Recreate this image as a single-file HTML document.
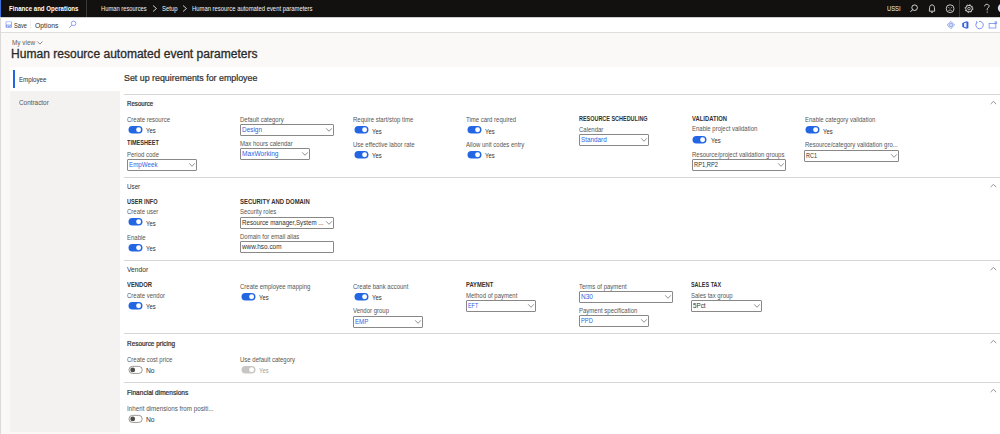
<!DOCTYPE html>
<html><head><meta charset="utf-8"><style>
html,body{margin:0;padding:0;width:1000px;height:434px;overflow:hidden;background:#faf9f8;}
body{position:relative;font-family:"Liberation Sans",sans-serif;}
.t{position:absolute;white-space:nowrap;line-height:1;}
.r{position:absolute;display:block;}
</style></head><body>
<div class="r" style="left:0px;top:0px;width:1000px;height:17px;background:#121110;"></div>
<div class="r" style="left:0px;top:0px;width:1px;height:17px;background:#3f6fd8;"></div>
<div class="t" style="left:9.00px;top:6px;font-size:6.8px;color:#ffffff;font-weight:700;transform:scaleX(0.8975);transform-origin:0 0;">Finance and Operations</div>
<div class="r" style="left:86px;top:0px;width:1px;height:17px;background:#3b3a39;"></div>
<div class="t" style="left:101.40px;top:6px;font-size:6.6px;color:#f3f2f1;font-weight:400;transform:scaleX(0.8781);transform-origin:0 0;">Human resources</div>
<svg class="r" style="left:151px;top:4px;" width="8" height="9" viewBox="0 0 8 9"><polyline points="2,1.5 5.5,4.5 2,7.5" fill="none" stroke="#f3f2f1" stroke-width="0.8"/></svg>
<div class="t" style="left:161.60px;top:6px;font-size:6.6px;color:#f3f2f1;font-weight:400;transform:scaleX(0.8994);transform-origin:0 0;">Setup</div>
<svg class="r" style="left:181px;top:4px;" width="8" height="9" viewBox="0 0 8 9"><polyline points="2,1.5 5.5,4.5 2,7.5" fill="none" stroke="#f3f2f1" stroke-width="0.8"/></svg>
<div class="t" style="left:192.00px;top:6px;font-size:6.6px;color:#f3f2f1;font-weight:400;transform:scaleX(0.8933);transform-origin:0 0;">Human resource automated event parameters</div>
<div class="t" style="left:887.00px;top:6px;font-size:6.6px;color:#f3f2f1;font-weight:400;transform:scaleX(0.8772);transform-origin:0 0;">USSI</div>
<svg class="r" style="left:908px;top:2px;" width="12" height="12" viewBox="0 0 12 12"><circle cx="6.6" cy="5.7" r="2.8" fill="none" stroke="#f3f2f1" stroke-width="0.85"/><line x1="4.6" y1="7.7" x2="2.4" y2="9.9" stroke="#f3f2f1" stroke-width="0.95"/></svg>
<svg class="r" style="left:927px;top:2px;" width="10" height="12" viewBox="0 0 10 12"><path d="M2.3,9.2 L2.6,5.6 C2.7,3.8 3.6,2.9 5,2.9 C6.4,2.9 7.3,3.8 7.4,5.6 L7.7,9.2 Z" fill="none" stroke="#f3f2f1" stroke-width="0.8" stroke-linejoin="round"/><line x1="4" y1="10.4" x2="6" y2="10.4" stroke="#f3f2f1" stroke-width="0.7"/></svg>
<svg class="r" style="left:945px;top:3px;" width="11" height="11" viewBox="0 0 11 11"><circle cx="5.1" cy="5.7" r="3.9" fill="none" stroke="#f3f2f1" stroke-width="0.8"/><path d="M3.4,7.6 Q5.1,6.3 6.8,7.6" fill="none" stroke="#f3f2f1" stroke-width="0.6"/><line x1="3.3" y1="4.4" x2="4.5" y2="5.1" stroke="#f3f2f1" stroke-width="0.6"/><line x1="6.9" y1="4.4" x2="5.7" y2="5.1" stroke="#f3f2f1" stroke-width="0.6"/></svg>
<div class="r" style="left:959px;top:0px;width:1px;height:17px;background:#3b3a39;"></div>
<svg class="r" style="left:963px;top:2px;" width="12" height="13" viewBox="0 0 12 13"><circle cx="6" cy="6.6" r="3.3" fill="none" stroke="#f3f2f1" stroke-width="0.8"/><circle cx="6" cy="6.6" r="3.9" fill="none" stroke="#f3f2f1" stroke-width="0.9" stroke-dasharray="1.2 1.86"/><circle cx="6" cy="6.6" r="1.3" fill="none" stroke="#f3f2f1" stroke-width="0.65"/></svg>
<svg class="r" style="left:983px;top:3px;" width="8" height="11" viewBox="0 0 8 11"><path d="M1.7,3.3 C1.7,1.9 2.8,1.3 3.9,1.3 C5.1,1.3 6.1,2.0 6.1,3.2 C6.1,4.6 4.2,4.9 4.2,6.4 L4.2,7.4" fill="none" stroke="#f3f2f1" stroke-width="0.85"/><circle cx="4.2" cy="9.1" r="0.55" fill="#f3f2f1"/></svg>
<svg class="r" style="left:997px;top:3px;" width="3" height="11" viewBox="0 0 3 11"><circle cx="5.2" cy="5.1" r="4.4" fill="#d3def3"/></svg>
<div class="r" style="left:0px;top:17px;width:1000px;height:15px;background:#ffffff;"></div>
<div class="r" style="left:0px;top:32px;width:1000px;height:1px;background:#e1dfdd;"></div>
<div class="r" style="left:0px;top:17px;width:1000px;height:1px;background:#cfcfcf;"></div>
<svg class="r" style="left:4px;top:20px;" width="10" height="10" viewBox="0 0 10 10"><rect x="1.6" y="1.4" width="6.3" height="6.4" rx="0.7" fill="#8c9ff0" /><rect x="2.4" y="2.1" width="4.7" height="2.5" fill="#fff"/><rect x="3.1" y="5.6" width="3.3" height="1.5" fill="#fff"/><rect x="3.6" y="6.3" width="2.3" height="0.8" fill="#5a78e6"/></svg>
<div class="t" style="left:13.50px;top:23px;font-size:6.8px;color:#323130;font-weight:400;transform:scaleX(0.8323);transform-origin:0 0;">Save</div>
<div class="r" style="left:30px;top:20px;width:1px;height:9px;background:#f1f0ef;"></div>
<div class="t" style="left:35.00px;top:23px;font-size:6.8px;color:#323130;font-weight:400;transform:scaleX(1.0027);transform-origin:0 0;">Options</div>
<svg class="r" style="left:68px;top:20px;" width="10" height="9" viewBox="0 0 10 9"><circle cx="5.6" cy="3.4" r="2.3" fill="none" stroke="#6d84ec" stroke-width="0.75"/><line x1="3.9" y1="5.1" x2="1.3" y2="7.7" stroke="#6d84ec" stroke-width="0.8"/></svg>
<svg class="r" style="left:946px;top:20px;" width="10" height="10" viewBox="0 0 10 10"><path d="M4.9,1.4 L8.5,5 L4.9,8.6 L1.3,5 Z" fill="none" stroke="#5a7de6" stroke-width="0.7"/><circle cx="4.9" cy="5" r="1.7" fill="none" stroke="#5a7de6" stroke-width="0.6"/><path d="M3.7,3.8 L6.1,6.2 M6.1,3.8 L3.7,6.2" stroke="#8aa2ee" stroke-width="0.4"/></svg>
<svg class="r" style="left:961px;top:20px;" width="9" height="10" viewBox="0 0 9 10"><path d="M1.3,2.9 L5.6,1.2 L7.4,1.9 L7.4,8.1 L5.6,8.8 L1.3,7.1 Z" fill="#2b5ee0"/><path d="M3,3.3 L5.5,2.5 L5.5,7.5 L3,6.7 Z" fill="#e8eefc"/></svg>
<svg class="r" style="left:974px;top:20px;" width="10" height="10" viewBox="0 0 10 10"><path d="M3.0,2.4 A3.7,3.7 0 1 0 5.0,1.4" fill="none" stroke="#4d72e4" stroke-width="0.75"/><path d="M2.0,1.0 L3.3,2.5 L1.8,3.6" fill="none" stroke="#4d72e4" stroke-width="0.65"/></svg>
<svg class="r" style="left:988px;top:20px;" width="10" height="10" viewBox="0 0 10 10"><rect x="1.1" y="3.4" width="6.8" height="4.6" fill="none" stroke="#5a7de6" stroke-width="0.7"/><path d="M6.4,1.8 L8.6,1.8 L8.6,4.0 M8.6,1.8 L6.2,4.2" fill="none" stroke="#5a7de6" stroke-width="0.65"/></svg>
<div class="r" style="left:0px;top:33px;width:1000px;height:401px;background:#faf9f8;"></div>
<div class="r" style="left:0px;top:17px;width:1px;height:417px;background:#dcdad8;"></div>
<div class="t" style="left:11.90px;top:40px;font-size:6.5px;color:#605e5c;font-weight:400;transform:scaleX(0.9879);transform-origin:0 0;">My view</div>
<svg class="r" style="left:36px;top:40px;" width="8" height="6" viewBox="0 0 8 6"><polyline points="1.3,1.5 3.9,4.1 6.5,1.5" fill="none" stroke="#605e5c" stroke-width="0.7"/></svg>
<div class="t" style="left:11.00px;top:48px;font-size:12px;color:#2b2a29;font-weight:400;transform:scaleX(1.0042);transform-origin:0 0;-webkit-text-stroke:0.3px #2b2a29;">Human resource automated event parameters</div>
<div class="r" style="left:10px;top:67px;width:110px;height:365px;background:#f3f2f1;"></div>
<div class="r" style="left:10px;top:67px;width:110px;height:24px;background:#ffffff;"></div>
<div class="r" style="left:13px;top:70px;width:2px;height:18px;background:#2266e3;"></div>
<div class="t" style="left:18.60px;top:77px;font-size:6.6px;color:#323130;font-weight:400;transform:scaleX(0.9377);transform-origin:0 0;">Employee</div>
<div class="t" style="left:18.60px;top:100px;font-size:6.6px;color:#57554f;font-weight:400;transform:scaleX(0.9676);transform-origin:0 0;">Contractor</div>
<div class="r" style="left:120px;top:67px;width:880px;height:367px;background:#ffffff;"></div>
<div class="t" style="left:123.80px;top:74px;font-size:8.5px;color:#323130;font-weight:400;transform:scaleX(1.0418);transform-origin:0 0;-webkit-text-stroke:0.22px #323130;">Set up requirements for employee</div>
<div class="r" style="left:124px;top:94px;width:876px;height:1px;background:#d8d6d4;"></div>
<div class="t" style="left:127.40px;top:101px;font-size:6.6px;color:#323130;font-weight:400;transform:scaleX(0.9279);transform-origin:0 0;-webkit-text-stroke:0.22px #323130;">Resource</div>
<svg class="r" style="left:988px;top:100px;" width="10" height="6" viewBox="0 0 10 6"><polyline points="2.6,4.1 5.4,1.4 8.2,4.1" fill="none" stroke="#6f6d6b" stroke-width="0.75"/></svg>
<div class="t" style="left:127.00px;top:117px;font-size:6.5px;color:#57554f;font-weight:400;transform:scaleX(0.9231);transform-origin:0 0;">Create resource</div>
<svg class="r" style="left:127.5px;top:125px;" width="16" height="10" viewBox="0 0 16 10"><rect x="0.5" y="0.9" width="14" height="7.6" rx="3.8" fill="#2266e3"/><circle cx="10.6" cy="4.7" r="2.45" fill="#fff"/></svg>
<div class="t" style="left:146.00px;top:127px;font-size:7.0px;color:#323130;font-weight:400;transform:scaleX(0.8405);transform-origin:0 0;">Yes</div>
<div class="t" style="left:127.40px;top:140px;font-size:6.5px;color:#323130;font-weight:700;transform:scaleX(0.8548);transform-origin:0 0;">TIMESHEET</div>
<div class="t" style="left:127.00px;top:152px;font-size:6.5px;color:#57554f;font-weight:400;transform:scaleX(0.9231);transform-origin:0 0;">Period code</div>
<div class="r" style="left:127px;top:159px;width:68px;height:10px;border:1px solid #8a8886;border-radius:1px;background:#fff"></div>
<div class="t" style="left:129.40px;top:162px;font-size:6.6px;color:#2f5fdf;font-weight:400;transform:scaleX(0.9407);transform-origin:0 0;">EmpWeek</div>
<svg class="r" style="left:188px;top:161px;" width="8" height="8" viewBox="0 0 8 8"><polyline points="1.2,2.30 4,5.30 6.8,2.30" fill="none" stroke="#6b6967" stroke-width="0.72"/></svg>
<div class="t" style="left:240.00px;top:117px;font-size:6.5px;color:#57554f;font-weight:400;transform:scaleX(0.9231);transform-origin:0 0;">Default category</div>
<div class="r" style="left:240px;top:124px;width:92px;height:10px;border:1px solid #8a8886;border-radius:1px;background:#fff"></div>
<div class="t" style="left:242.40px;top:127px;font-size:6.6px;color:#2f5fdf;font-weight:400;transform:scaleX(0.9741);transform-origin:0 0;">Design</div>
<svg class="r" style="left:325px;top:126px;" width="8" height="8" viewBox="0 0 8 8"><polyline points="1.2,2.30 4,5.30 6.8,2.30" fill="none" stroke="#6b6967" stroke-width="0.72"/></svg>
<div class="t" style="left:240.00px;top:141px;font-size:6.5px;color:#57554f;font-weight:400;transform:scaleX(0.9231);transform-origin:0 0;">Max hours calendar</div>
<div class="r" style="left:240px;top:148px;width:68px;height:10px;border:1px solid #8a8886;border-radius:1px;background:#fff"></div>
<div class="t" style="left:242.40px;top:151px;font-size:6.6px;color:#2f5fdf;font-weight:400;transform:scaleX(0.9991);transform-origin:0 0;">MaxWorking</div>
<svg class="r" style="left:301px;top:150px;" width="8" height="8" viewBox="0 0 8 8"><polyline points="1.2,2.30 4,5.30 6.8,2.30" fill="none" stroke="#6b6967" stroke-width="0.72"/></svg>
<div class="t" style="left:353.00px;top:117px;font-size:6.5px;color:#57554f;font-weight:400;transform:scaleX(0.9231);transform-origin:0 0;">Require start/stop time</div>
<svg class="r" style="left:353.5px;top:125.3px;" width="16" height="10" viewBox="0 0 16 10"><rect x="0.5" y="0.9" width="14" height="7.6" rx="3.8" fill="#2266e3"/><circle cx="10.6" cy="4.7" r="2.45" fill="#fff"/></svg>
<div class="t" style="left:372.00px;top:128px;font-size:7.0px;color:#323130;font-weight:400;transform:scaleX(0.8405);transform-origin:0 0;">Yes</div>
<div class="t" style="left:353.00px;top:142px;font-size:6.5px;color:#57554f;font-weight:400;transform:scaleX(0.9231);transform-origin:0 0;">Use effective labor rate</div>
<svg class="r" style="left:353.5px;top:150.15px;" width="16" height="10" viewBox="0 0 16 10"><rect x="0.5" y="0.9" width="14" height="7.6" rx="3.8" fill="#2266e3"/><circle cx="10.6" cy="4.7" r="2.45" fill="#fff"/></svg>
<div class="t" style="left:372.00px;top:152px;font-size:7.0px;color:#323130;font-weight:400;transform:scaleX(0.8405);transform-origin:0 0;">Yes</div>
<div class="t" style="left:466.00px;top:117px;font-size:6.5px;color:#57554f;font-weight:400;transform:scaleX(0.9231);transform-origin:0 0;">Time card required</div>
<svg class="r" style="left:466.5px;top:125.3px;" width="16" height="10" viewBox="0 0 16 10"><rect x="0.5" y="0.9" width="14" height="7.6" rx="3.8" fill="#2266e3"/><circle cx="10.6" cy="4.7" r="2.45" fill="#fff"/></svg>
<div class="t" style="left:485.00px;top:128px;font-size:7.0px;color:#323130;font-weight:400;transform:scaleX(0.8405);transform-origin:0 0;">Yes</div>
<div class="t" style="left:466.00px;top:142px;font-size:6.5px;color:#57554f;font-weight:400;transform:scaleX(0.9231);transform-origin:0 0;">Allow unit codes entry</div>
<svg class="r" style="left:466.5px;top:150.15px;" width="16" height="10" viewBox="0 0 16 10"><rect x="0.5" y="0.9" width="14" height="7.6" rx="3.8" fill="#2266e3"/><circle cx="10.6" cy="4.7" r="2.45" fill="#fff"/></svg>
<div class="t" style="left:485.00px;top:152px;font-size:7.0px;color:#323130;font-weight:400;transform:scaleX(0.8405);transform-origin:0 0;">Yes</div>
<div class="t" style="left:578.70px;top:116px;font-size:6.5px;color:#323130;font-weight:700;transform:scaleX(0.8404);transform-origin:0 0;">RESOURCE SCHEDULING</div>
<div class="t" style="left:578.70px;top:127px;font-size:6.5px;color:#57554f;font-weight:400;transform:scaleX(0.9231);transform-origin:0 0;">Calendar</div>
<div class="r" style="left:579px;top:134px;width:68px;height:10px;border:1px solid #8a8886;border-radius:1px;background:#fff"></div>
<div class="t" style="left:581.40px;top:137px;font-size:6.6px;color:#2f5fdf;font-weight:400;transform:scaleX(0.9602);transform-origin:0 0;">Standard</div>
<svg class="r" style="left:640px;top:136px;" width="8" height="8" viewBox="0 0 8 8"><polyline points="1.2,2.30 4,5.30 6.8,2.30" fill="none" stroke="#6b6967" stroke-width="0.72"/></svg>
<div class="t" style="left:691.50px;top:116px;font-size:6.5px;color:#323130;font-weight:700;transform:scaleX(0.9054);transform-origin:0 0;">VALIDATION</div>
<div class="t" style="left:691.50px;top:126px;font-size:6.5px;color:#57554f;font-weight:400;transform:scaleX(0.9231);transform-origin:0 0;">Enable project validation</div>
<svg class="r" style="left:692px;top:134.5px;" width="16" height="10" viewBox="0 0 16 10"><rect x="0.5" y="0.9" width="14" height="7.6" rx="3.8" fill="#2266e3"/><circle cx="10.6" cy="4.7" r="2.45" fill="#fff"/></svg>
<div class="t" style="left:710.50px;top:137px;font-size:7.0px;color:#323130;font-weight:400;transform:scaleX(0.8405);transform-origin:0 0;">Yes</div>
<div class="t" style="left:691.50px;top:152px;font-size:6.5px;color:#57554f;font-weight:400;transform:scaleX(0.9231);transform-origin:0 0;">Resource/project validation groups</div>
<div class="r" style="left:692px;top:159px;width:92px;height:10px;border:1px solid #8a8886;border-radius:1px;background:#fff"></div>
<div class="t" style="left:694.40px;top:162px;font-size:6.6px;color:#323130;font-weight:400;transform:scaleX(0.8727);transform-origin:0 0;">RP1,RP2</div>
<svg class="r" style="left:777px;top:161px;" width="8" height="8" viewBox="0 0 8 8"><polyline points="1.2,2.30 4,5.30 6.8,2.30" fill="none" stroke="#6b6967" stroke-width="0.72"/></svg>
<div class="t" style="left:804.50px;top:117px;font-size:6.5px;color:#57554f;font-weight:400;transform:scaleX(0.9231);transform-origin:0 0;">Enable category validation</div>
<svg class="r" style="left:804.5px;top:125.45px;" width="16" height="10" viewBox="0 0 16 10"><rect x="0.5" y="0.9" width="14" height="7.6" rx="3.8" fill="#2266e3"/><circle cx="10.6" cy="4.7" r="2.45" fill="#fff"/></svg>
<div class="t" style="left:823.00px;top:128px;font-size:7.0px;color:#323130;font-weight:400;transform:scaleX(0.8405);transform-origin:0 0;">Yes</div>
<div class="t" style="left:804.50px;top:142px;font-size:6.5px;color:#57554f;font-weight:400;transform:scaleX(0.9231);transform-origin:0 0;">Resource/category validation gro...</div>
<div class="r" style="left:804px;top:150px;width:93px;height:10px;border:1px solid #8a8886;border-radius:1px;background:#fff"></div>
<div class="t" style="left:806.40px;top:153px;font-size:6.6px;color:#323130;font-weight:400;transform:scaleX(0.8331);transform-origin:0 0;">RC1</div>
<svg class="r" style="left:890px;top:152px;" width="8" height="8" viewBox="0 0 8 8"><polyline points="1.2,2.30 4,5.30 6.8,2.30" fill="none" stroke="#6b6967" stroke-width="0.72"/></svg>
<div class="r" style="left:124px;top:177px;width:876px;height:1px;background:#d8d6d4;"></div>
<div class="t" style="left:127.40px;top:184px;font-size:6.6px;color:#323130;font-weight:400;transform:scaleX(0.9481);transform-origin:0 0;">User</div>
<svg class="r" style="left:988px;top:183px;" width="10" height="6" viewBox="0 0 10 6"><polyline points="2.6,4.1 5.4,1.4 8.2,4.1" fill="none" stroke="#6f6d6b" stroke-width="0.75"/></svg>
<div class="t" style="left:127.40px;top:199px;font-size:6.5px;color:#323130;font-weight:700;transform:scaleX(0.8614);transform-origin:0 0;">USER INFO</div>
<div class="t" style="left:127.00px;top:209px;font-size:6.5px;color:#57554f;font-weight:400;transform:scaleX(0.9231);transform-origin:0 0;">Create user</div>
<svg class="r" style="left:127.5px;top:217.4px;" width="16" height="10" viewBox="0 0 16 10"><rect x="0.5" y="0.9" width="14" height="7.6" rx="3.8" fill="#2266e3"/><circle cx="10.6" cy="4.7" r="2.45" fill="#fff"/></svg>
<div class="t" style="left:146.00px;top:220px;font-size:7.0px;color:#323130;font-weight:400;transform:scaleX(0.8405);transform-origin:0 0;">Yes</div>
<div class="t" style="left:127.00px;top:235px;font-size:6.5px;color:#57554f;font-weight:400;transform:scaleX(0.9231);transform-origin:0 0;">Enable</div>
<svg class="r" style="left:127.5px;top:242.9px;" width="16" height="10" viewBox="0 0 16 10"><rect x="0.5" y="0.9" width="14" height="7.6" rx="3.8" fill="#2266e3"/><circle cx="10.6" cy="4.7" r="2.45" fill="#fff"/></svg>
<div class="t" style="left:146.00px;top:245px;font-size:7.0px;color:#323130;font-weight:400;transform:scaleX(0.8405);transform-origin:0 0;">Yes</div>
<div class="t" style="left:239.80px;top:199px;font-size:6.5px;color:#323130;font-weight:700;transform:scaleX(0.9117);transform-origin:0 0;">SECURITY AND DOMAIN</div>
<div class="t" style="left:240.00px;top:209px;font-size:6.5px;color:#57554f;font-weight:400;transform:scaleX(0.9231);transform-origin:0 0;">Security roles</div>
<div class="r" style="left:240px;top:217px;width:92px;height:10px;border:1px solid #8a8886;border-radius:1px;background:#fff"></div>
<div class="t" style="left:242.40px;top:220px;font-size:6.6px;color:#323130;font-weight:400;transform:scaleX(0.9383);transform-origin:0 0;">Resource manager,System ...</div>
<svg class="r" style="left:325px;top:219px;" width="8" height="8" viewBox="0 0 8 8"><polyline points="1.2,2.30 4,5.30 6.8,2.30" fill="none" stroke="#6b6967" stroke-width="0.72"/></svg>
<div class="t" style="left:240.00px;top:234px;font-size:6.5px;color:#57554f;font-weight:400;transform:scaleX(0.9231);transform-origin:0 0;">Domain for email alias</div>
<div class="r" style="left:240px;top:241px;width:92px;height:10px;border:1px solid #8a8886;border-radius:1px;background:#fff"></div>
<div class="t" style="left:242.40px;top:244px;font-size:6.6px;color:#323130;font-weight:400;transform:scaleX(0.9708);transform-origin:0 0;">www.hso.com</div>
<div class="r" style="left:124px;top:260px;width:876px;height:1px;background:#d8d6d4;"></div>
<div class="t" style="left:127.40px;top:267px;font-size:6.6px;color:#323130;font-weight:400;transform:scaleX(1.0093);transform-origin:0 0;">Vendor</div>
<svg class="r" style="left:988px;top:266px;" width="10" height="6" viewBox="0 0 10 6"><polyline points="2.6,4.1 5.4,1.4 8.2,4.1" fill="none" stroke="#6f6d6b" stroke-width="0.75"/></svg>
<div class="t" style="left:127.40px;top:282px;font-size:6.5px;color:#323130;font-weight:700;transform:scaleX(0.9025);transform-origin:0 0;">VENDOR</div>
<div class="t" style="left:127.00px;top:293px;font-size:6.5px;color:#57554f;font-weight:400;transform:scaleX(0.9231);transform-origin:0 0;">Create vendor</div>
<svg class="r" style="left:127.5px;top:300.5px;" width="16" height="10" viewBox="0 0 16 10"><rect x="0.5" y="0.9" width="14" height="7.6" rx="3.8" fill="#2266e3"/><circle cx="10.6" cy="4.7" r="2.45" fill="#fff"/></svg>
<div class="t" style="left:146.00px;top:303px;font-size:7.0px;color:#323130;font-weight:400;transform:scaleX(0.8405);transform-origin:0 0;">Yes</div>
<div class="t" style="left:240.00px;top:284px;font-size:6.5px;color:#57554f;font-weight:400;transform:scaleX(0.9231);transform-origin:0 0;">Create employee mapping</div>
<svg class="r" style="left:240.5px;top:291.5px;" width="16" height="10" viewBox="0 0 16 10"><rect x="0.5" y="0.9" width="14" height="7.6" rx="3.8" fill="#2266e3"/><circle cx="10.6" cy="4.7" r="2.45" fill="#fff"/></svg>
<div class="t" style="left:259.00px;top:294px;font-size:7.0px;color:#323130;font-weight:400;transform:scaleX(0.8405);transform-origin:0 0;">Yes</div>
<div class="t" style="left:353.00px;top:284px;font-size:6.5px;color:#57554f;font-weight:400;transform:scaleX(0.9231);transform-origin:0 0;">Create bank account</div>
<svg class="r" style="left:353.5px;top:291.5px;" width="16" height="10" viewBox="0 0 16 10"><rect x="0.5" y="0.9" width="14" height="7.6" rx="3.8" fill="#2266e3"/><circle cx="10.6" cy="4.7" r="2.45" fill="#fff"/></svg>
<div class="t" style="left:372.00px;top:294px;font-size:7.0px;color:#323130;font-weight:400;transform:scaleX(0.8405);transform-origin:0 0;">Yes</div>
<div class="t" style="left:353.00px;top:308px;font-size:6.5px;color:#57554f;font-weight:400;transform:scaleX(0.9231);transform-origin:0 0;">Vendor group</div>
<div class="r" style="left:353px;top:316px;width:68px;height:10px;border:1px solid #8a8886;border-radius:1px;background:#fff"></div>
<div class="t" style="left:355.40px;top:319px;font-size:6.6px;color:#2f5fdf;font-weight:400;transform:scaleX(0.9373);transform-origin:0 0;">EMP</div>
<svg class="r" style="left:414px;top:318px;" width="8" height="8" viewBox="0 0 8 8"><polyline points="1.2,2.30 4,5.30 6.8,2.30" fill="none" stroke="#6b6967" stroke-width="0.72"/></svg>
<div class="t" style="left:466.00px;top:282px;font-size:6.5px;color:#323130;font-weight:700;transform:scaleX(0.8892);transform-origin:0 0;">PAYMENT</div>
<div class="t" style="left:466.00px;top:293px;font-size:6.5px;color:#57554f;font-weight:400;transform:scaleX(0.9231);transform-origin:0 0;">Method of payment</div>
<div class="r" style="left:466px;top:300px;width:68px;height:10px;border:1px solid #8a8886;border-radius:1px;background:#fff"></div>
<div class="t" style="left:468.40px;top:303px;font-size:6.6px;color:#2f5fdf;font-weight:400;transform:scaleX(0.8180);transform-origin:0 0;">EFT</div>
<svg class="r" style="left:527px;top:302px;" width="8" height="8" viewBox="0 0 8 8"><polyline points="1.2,2.30 4,5.30 6.8,2.30" fill="none" stroke="#6b6967" stroke-width="0.72"/></svg>
<div class="t" style="left:578.70px;top:284px;font-size:6.5px;color:#57554f;font-weight:400;transform:scaleX(0.9231);transform-origin:0 0;">Terms of payment</div>
<div class="r" style="left:579px;top:291px;width:92px;height:10px;border:1px solid #8a8886;border-radius:1px;background:#fff"></div>
<div class="t" style="left:581.40px;top:294px;font-size:6.6px;color:#2f5fdf;font-weight:400;transform:scaleX(0.9910);transform-origin:0 0;">N30</div>
<svg class="r" style="left:664px;top:293px;" width="8" height="8" viewBox="0 0 8 8"><polyline points="1.2,2.30 4,5.30 6.8,2.30" fill="none" stroke="#6b6967" stroke-width="0.72"/></svg>
<div class="t" style="left:578.70px;top:308px;font-size:6.5px;color:#57554f;font-weight:400;transform:scaleX(0.9231);transform-origin:0 0;">Payment specification</div>
<div class="r" style="left:579px;top:315px;width:68px;height:10px;border:1px solid #8a8886;border-radius:1px;background:#fff"></div>
<div class="t" style="left:581.40px;top:318px;font-size:6.6px;color:#2f5fdf;font-weight:400;transform:scaleX(0.8700);transform-origin:0 0;">PPD</div>
<svg class="r" style="left:640px;top:317px;" width="8" height="8" viewBox="0 0 8 8"><polyline points="1.2,2.30 4,5.30 6.8,2.30" fill="none" stroke="#6b6967" stroke-width="0.72"/></svg>
<div class="t" style="left:691.30px;top:282px;font-size:6.5px;color:#323130;font-weight:700;transform:scaleX(0.8361);transform-origin:0 0;">SALES TAX</div>
<div class="t" style="left:691.30px;top:293px;font-size:6.5px;color:#57554f;font-weight:400;transform:scaleX(0.9231);transform-origin:0 0;">Sales tax group</div>
<div class="r" style="left:691px;top:300px;width:69px;height:10px;border:1px solid #8a8886;border-radius:1px;background:#fff"></div>
<div class="t" style="left:693.40px;top:303px;font-size:6.6px;color:#323130;font-weight:400;transform:scaleX(0.9543);transform-origin:0 0;">5Pct</div>
<svg class="r" style="left:753px;top:302px;" width="8" height="8" viewBox="0 0 8 8"><polyline points="1.2,2.30 4,5.30 6.8,2.30" fill="none" stroke="#6b6967" stroke-width="0.72"/></svg>
<div class="r" style="left:124px;top:333px;width:876px;height:1px;background:#d8d6d4;"></div>
<div class="t" style="left:127.40px;top:341px;font-size:6.6px;color:#323130;font-weight:400;transform:scaleX(0.9720);transform-origin:0 0;-webkit-text-stroke:0.22px #323130;">Resource pricing</div>
<svg class="r" style="left:988px;top:339px;" width="10" height="6" viewBox="0 0 10 6"><polyline points="2.6,4.1 5.4,1.4 8.2,4.1" fill="none" stroke="#6f6d6b" stroke-width="0.75"/></svg>
<div class="t" style="left:127.00px;top:357px;font-size:6.5px;color:#57554f;font-weight:400;transform:scaleX(0.9231);transform-origin:0 0;">Create cost price</div>
<svg class="r" style="left:127.5px;top:364.65px;" width="16" height="10" viewBox="0 0 16 10"><rect x="0.95" y="1.35" width="13.3" height="7.1" rx="3.55" fill="#fff" stroke="#797775" stroke-width="0.75"/><circle cx="4.7" cy="4.9" r="2.45" fill="#4f4d4b"/></svg>
<div class="t" style="left:146.00px;top:367px;font-size:7.0px;color:#323130;font-weight:400;transform:scaleX(0.9606);transform-origin:0 0;">No</div>
<div class="t" style="left:240.00px;top:357px;font-size:6.5px;color:#57554f;font-weight:400;transform:scaleX(0.9231);transform-origin:0 0;">Use default category</div>
<svg class="r" style="left:240.5px;top:364.65px;" width="16" height="10" viewBox="0 0 16 10"><rect x="0.5" y="0.9" width="14" height="7.6" rx="3.8" fill="#c8c6c4"/><circle cx="10.6" cy="4.7" r="2.45" fill="#fff"/></svg>
<div class="t" style="left:259.00px;top:367px;font-size:7.0px;color:#a19f9d;font-weight:400;transform:scaleX(0.8405);transform-origin:0 0;">Yes</div>
<div class="r" style="left:124px;top:382px;width:876px;height:1px;background:#d8d6d4;"></div>
<div class="t" style="left:127.40px;top:390px;font-size:6.6px;color:#323130;font-weight:400;transform:scaleX(0.9939);transform-origin:0 0;-webkit-text-stroke:0.22px #323130;">Financial dimensions</div>
<svg class="r" style="left:988px;top:388px;" width="10" height="6" viewBox="0 0 10 6"><polyline points="2.6,4.1 5.4,1.4 8.2,4.1" fill="none" stroke="#6f6d6b" stroke-width="0.75"/></svg>
<div class="t" style="left:127.00px;top:406px;font-size:6.5px;color:#57554f;font-weight:400;transform:scaleX(0.9627);transform-origin:0 0;">Inherit dimensions from positi...</div>
<svg class="r" style="left:127.5px;top:413.5px;" width="16" height="10" viewBox="0 0 16 10"><rect x="0.95" y="1.35" width="13.3" height="7.1" rx="3.55" fill="#fff" stroke="#797775" stroke-width="0.75"/><circle cx="4.7" cy="4.9" r="2.45" fill="#4f4d4b"/></svg>
<div class="t" style="left:146.00px;top:416px;font-size:7.0px;color:#323130;font-weight:400;transform:scaleX(0.9606);transform-origin:0 0;">No</div>
</body></html>
